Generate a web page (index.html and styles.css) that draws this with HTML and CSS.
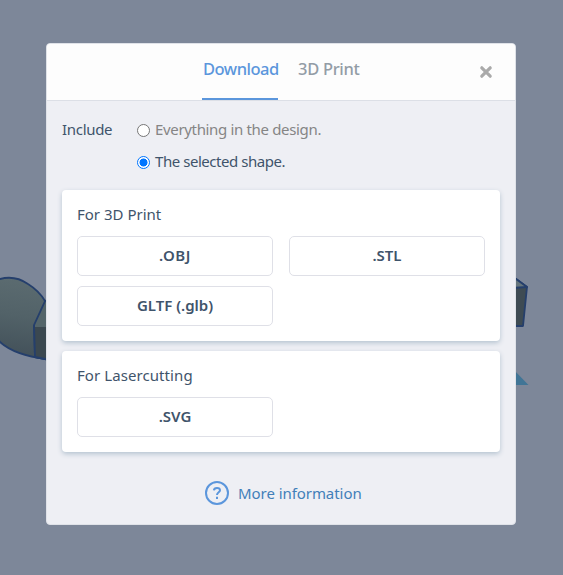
FILE: index.html
```html
<!DOCTYPE html>
<html lang="en">
<head>
<meta charset="utf-8">
<title>Download</title>
<link rel="stylesheet" href="styles.css">
</head>
<body>
<svg class="scene" width="563" height="575" viewBox="0 0 563 575" aria-hidden="true">
  <defs>
    <linearGradient id="ball" x1="0.3" y1="0" x2="0.2" y2="1">
      <stop offset="0" stop-color="#5b6b70"/>
      <stop offset="0.45" stop-color="#526268"/>
      <stop offset="1" stop-color="#414f58"/>
    </linearGradient>
  </defs>
  <g stroke="#253f6c" stroke-width="1.8" stroke-linejoin="round">
    <path d="M-6 281C6 276 18 277 28 284C36 289 41 294 45 301L50 330L46 359C30 357 12 353 0 342L-6 334Z" fill="url(#ball)"/>
    <path d="M45 301L34 325L35 357L50 360V300Z" fill="#54656a"/>
    <path d="M35 327H50V360L35 357Z" fill="#3b4850" stroke="none"/>
    <path d="M34 325L35 357L50 360" fill="none"/>
    <path d="M512 276L527 287L523 326H512Z" fill="#3e4b53"/>
    <path d="M512 276L527 287L512 288Z" fill="#65757c"/>
  </g>
  <path d="M512 368L528.500 385H512Z" fill="#417596"/>
</svg>
<main class="dialog">
  <header class="header">
    <nav class="tabs">
      <a class="tab active"><span class="t-download">Download</span></a>
      <a class="tab"><span class="t-print">3D Print</span></a>
    </nav>
    <svg class="close" width="14" height="14" viewBox="0 0 14 14"><path d="M2.800 2.800L11.200 11.200M11.200 2.800L2.800 11.200" stroke="#aaa" stroke-width="3.200" stroke-linecap="round"/></svg>
  </header>
  <div class="content">
    <div class="include">
      <span class="include-label">Include</span>
      <div class="options">
        <div class="option muted"><i class="radio"></i><span class="t-all">Everything in the design.</span></div>
        <div class="option"><i class="radio checked"></i><span class="t-selected">The selected shape.</span></div>
      </div>
    </div>
    <section class="card">
      <h2><span class="t-for-print">For 3D Print</span></h2>
      <div class="buttons">
        <button><span class="t-obj">.OBJ</span></button>
        <button><span class="t-stl">.STL</span></button>
        <button><span class="t-gltf">GLTF (.glb)</span></button>
      </div>
    </section>
    <section class="card">
      <h2><span class="t-laser">For Lasercutting</span></h2>
      <div class="buttons">
        <button><span class="t-svg">.SVG</span></button>
      </div>
    </section>
    <a class="more">
      <svg width="24" height="24" viewBox="0 0 24 24" fill="none" stroke="#5b96dc" stroke-width="2"><circle cx="12" cy="12" r="11"/><path d="M8.900 9.400C9 7.700 10.100 6.900 12 6.900C13.900 6.900 15 7.800 15 9.300C15 11.400 12 11.200 12 14M12 15.700V17.900"/></svg>
      <span class="t-more">More information</span>
    </a>
  </div>
</main>
</body>
</html>
```
FILE: styles.css
```css
* { box-sizing: border-box; }
body {
  margin: 0;
  height: 575px;
  overflow: hidden;
  background: #7d8799;
  color: #3f546b;
  font: 15px/20px "Noto Sans", sans-serif;
  padding: 43px 0 0 46px;
}
.scene { position: absolute; left: 0; top: 0; }
.dialog {
  position: relative;
  width: 470px;
  height: 482px;
  border: 1px solid #dfe2e8;
  border-radius: 4px;
  background: #eeeff4;
  overflow: hidden;
}
.header {
  height: 57px;
  display: flex;
  justify-content: space-between;
  background: #fdfdfd;
  border-bottom: 1px solid #dcdfe6;
  padding: 0 22px 0 155px;
}
.tabs { display: flex; gap: 19px; }
.tab {
  width: 76px;
  height: 56px;
  padding: 13px 0 0 1px;
  font-size: 16.5px;
  font-weight: 500;
  line-height: 23px;
  color: #939ca6;
  white-space: nowrap;
}
.tab.active { color: #5b96dc; border-bottom: 2px solid #5b96dc; }
.close { margin-top: 21px; }
.content { padding: 18px 15px 0; }
.include { display: flex; height: 71px; }
.include-label { width: 75px; letter-spacing: -.3px; }
.options { display: grid; gap: 12px; align-content: start; }
.option { display: flex; align-items: center; gap: 5px; height: 20px; white-space: nowrap; }
.muted { color: #858585; }
.radio {
  width: 13px;
  height: 13px;
  margin-top: 2px;
  border: 1px solid #767676;
  border-radius: 50%;
  background: #fff;
}
.radio.checked {
  border-color: #0075ff;
  background: radial-gradient(circle, #0075ff 3.7px, #fff 4.3px);
}
.card {
  width: 438px;
  margin: 0 0 10px;
  padding: 14px 15px 15px;
  border-radius: 4px;
  background: #fff;
  box-shadow: 0 2px 5px #b5c3d0;
}
h2 { margin: 0 0 12px; font: inherit; }
.buttons { display: grid; grid-template-columns: 196px 196px; gap: 10px 16px; }
button {
  height: 40px;
  padding: 0 0 2px;
  border: 1px solid #dfe0e7;
  border-radius: 5px;
  background: #fff;
  color: #3f546b;
  font: 600 15px/20px "Noto Sans", sans-serif;
}
.more {
  display: flex;
  align-items: center;
  gap: 9px;
  margin: 29px 0 0 143px;
  color: #427fb9;
  white-space: nowrap;
}
.t-download { letter-spacing: -.5px; }
.t-print { letter-spacing: -.3px; }
.t-all { letter-spacing: -.34px; }
.t-selected { letter-spacing: -.45px; }
.t-obj { letter-spacing: .6px; }
.t-laser { letter-spacing: .08px; }
.t-more { letter-spacing: -.06px; }
```
